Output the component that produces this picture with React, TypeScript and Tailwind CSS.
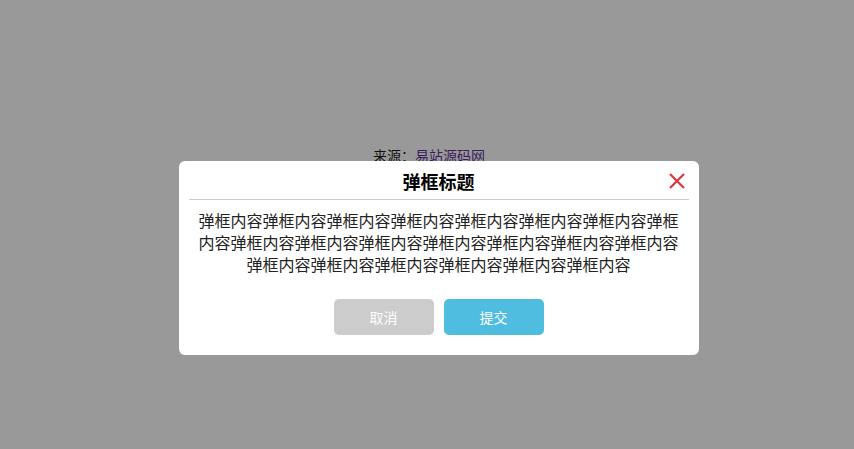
import React from 'react';

const body = '弹框内容'.repeat(21);

const CloseIcon: React.FC = () => (
    <svg width="18" height="18" viewBox="0 0 18 18" fill="none" stroke="#d9383c" strokeWidth="2.2" strokeLinecap="butt">
        <path d="M2 2 L16 16 M16 2 L2 16" />
    </svg>
);

const App: React.FC = () => {
    return (
        <div
            className="relative h-[449px] w-full overflow-hidden bg-[#999999] text-black"
            style={{ fontFamily: '"Microsoft YaHei", "Noto Sans CJK SC", "Noto Sans", sans-serif' }}
        >
            <p className="pt-[145px] pl-[4px] text-center text-[14px] leading-[20px] text-[#111]">
                来源：<a href="#" className="text-[#3a1a5c]">易站源码网</a>
            </p>

            <div className="absolute inset-0 flex justify-center pl-[23px] pt-[161px]">
                <div className="h-[194px] w-[520px] rounded-[6px] bg-white">
                    <div className="relative mx-[10px] flex h-[39px] items-center justify-center border-b border-[#cccccc] pt-[1px]">
                        <h3 className="text-[18px] font-bold leading-[24px]">弹框标题</h3>
                        <button className="absolute right-[3px] top-[11px] flex h-[18px] w-[18px] items-center justify-center">
                            <CloseIcon />
                        </button>
                    </div>
                    <p className="px-[20px] pt-[9px] text-center text-[16px] leading-[22px] text-[#222]">{body}</p>
                    <div className="mt-[24px] flex justify-center gap-[10px]">
                        <button className="h-[36px] w-[100px] rounded-[5px] bg-[#cccccc] text-[14px] text-white">取消</button>
                        <button className="h-[36px] w-[100px] rounded-[5px] bg-[#4fbde0] text-[14px] text-white">提交</button>
                    </div>
                </div>
            </div>
        </div>
    );
};

export default App;
